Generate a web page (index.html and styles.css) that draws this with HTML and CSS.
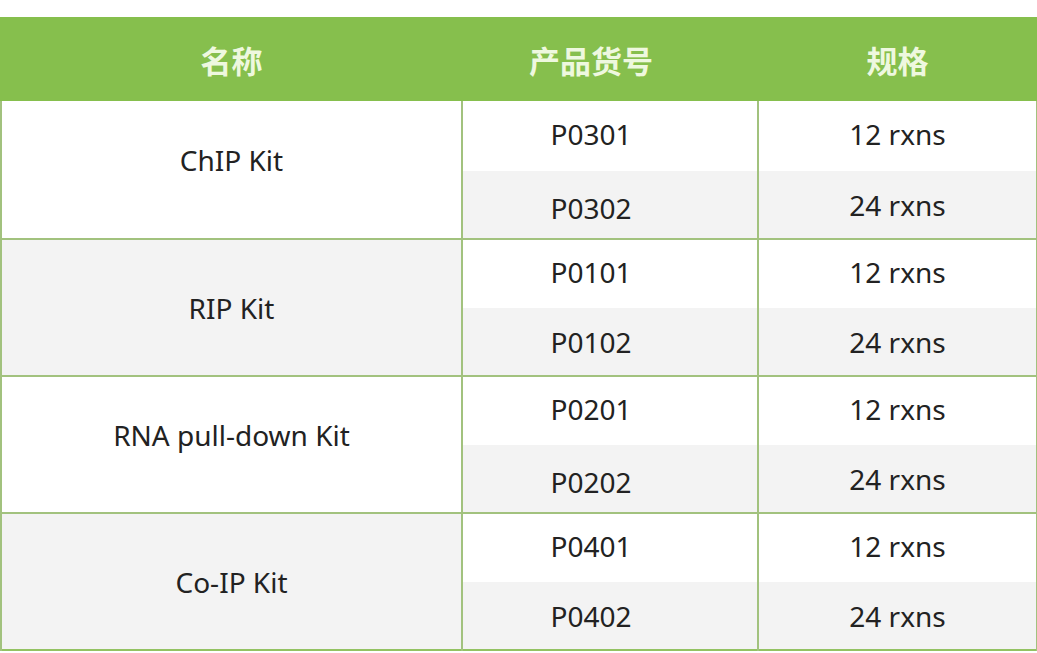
FILE: index.html
```html
<!DOCTYPE html>
<html lang="zh">
<head>
<meta charset="utf-8">
<title>产品规格</title>
<link rel="stylesheet" href="styles.css">
</head>
<body>
<div class="page">
  <table class="spec">
    <colgroup>
      <col class="c-name">
      <col class="c-code">
      <col class="c-size">
    </colgroup>
    <thead>
      <tr>
        <th>名称</th>
        <th class="code">产品货号</th>
        <th>规格</th>
      </tr>
    </thead>
    <tbody class="g1">
      <tr class="sub-a"><td rowspan="2" class="name white lift">ChIP Kit</td><td class="code">P0301</td><td>12 rxns</td></tr>
      <tr class="sub-b"><td class="code low">P0302</td><td>24 rxns</td></tr>
    </tbody>
    <tbody class="g2">
      <tr class="sub-a"><td rowspan="2" class="name gray">RIP Kit</td><td class="code">P0101</td><td>12 rxns</td></tr>
      <tr class="sub-b"><td class="code">P0102</td><td>24 rxns</td></tr>
    </tbody>
    <tbody class="g3">
      <tr class="sub-a"><td rowspan="2" class="name white lift">RNA pull-down Kit</td><td class="code">P0201</td><td>12 rxns</td></tr>
      <tr class="sub-b"><td class="code low">P0202</td><td>24 rxns</td></tr>
    </tbody>
    <tbody class="g4">
      <tr class="sub-a"><td rowspan="2" class="name gray">Co-IP Kit</td><td class="code">P0401</td><td>12 rxns</td></tr>
      <tr class="sub-b"><td class="code">P0402</td><td>24 rxns</td></tr>
    </tbody>
  </table>
</div>
</body>
</html>
```

FILE: styles.css
```css
html, body {
  margin: 0;
  padding: 0;
  background: #ffffff;
}

.page {
  padding-top: 17px;
  width: 1036px;
}

.spec {
  width: 1036px;
  border-collapse: collapse;
  table-layout: fixed;
  font-family: "Noto Sans", "Noto Sans CJK SC", sans-serif;
  color: #222222;
}

.c-name { width: 461px; }
.c-code { width: 296px; }
.c-size { width: 279px; }

.spec th {
  height: 84px;
  padding: 0;
  background: #86bf4d;
  color: #eef8df;
  font-family: "Noto Sans CJK SC", sans-serif;
  font-weight: 700;
  font-size: 31px;
  text-align: center;
  vertical-align: middle;
  border-left: 2px solid #86bf4d;
  border-right: 2px solid #86bf4d;
}

.spec th.code {
  padding-right: 38px;
}

.spec td {
  padding: 0;
  font-size: 28px;
  text-align: center;
  vertical-align: middle;
  border-left: 2px solid #a2c27e;
  border-right: 2px solid #a2c27e;
}

.spec td.code {
  padding-right: 38px;
}

.spec tbody {
  border-bottom: 2px solid #a2c27e;
}

.spec tbody.g4 {
  border-bottom: 2px solid #93c262;
}

.sub-a td {
  height: 64px;
  padding-bottom: 4px;
  background: #ffffff;
}

.g1 .sub-a td {
  height: 66px;
}

.sub-b td {
  height: 67px;
  background: #f3f3f3;
}

.sub-b td.code.low {
  height: 61px;
  padding-top: 6px;
}

.spec td.name {
  height: auto;
  padding-bottom: 0;
}

.spec td.name.lift {
  padding-bottom: 20px;
}

.spec td.name.white { background: #ffffff; }
.spec td.name.gray { background: #f3f3f3; }
```
